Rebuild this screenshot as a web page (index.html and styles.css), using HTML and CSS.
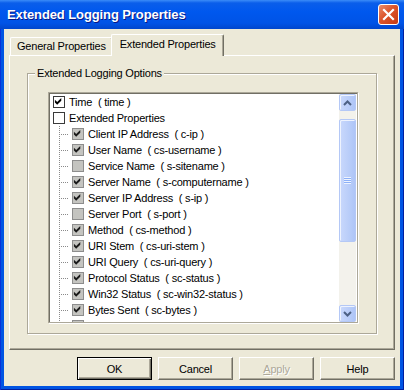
FILE: index.html
```html
<!DOCTYPE html>
<html lang="en">
<head>
  <meta charset="UTF-8"/>
  <title>Extended Logging Properties</title>
  <link rel="stylesheet" href="styles.css">
</head>
<body>
  <div class="window">
    <div class="titlebar">
      <span class="title">Extended Logging Properties</span>
      <span class="close">
        <svg width="13" height="13" viewBox="0 0 13 13"><path d="M2 2 L11 11 M11 2 L2 11" stroke="#fff" stroke-width="2.2" stroke-linecap="square"/></svg>
      </span>
    </div>
    <div class="frame">
      <div class="client">
        <div class="tabs">
          <div class="tab">General Properties</div>
          <div class="tab active">Extended Properties</div>
        </div>
        <div class="panel">
          <fieldset class="group">
            <legend>Extended Logging Options</legend>
            <div class="listbox">
              <div class="tree">
                <div class="row"><span class="cb on"><svg viewBox="0 0 11 11"><polygon points="1,3 3.5,5.5 8,1 8,4 3.5,8.5 1,6"/></svg></span><span class="label">Time  ( time )</span></div>
                <div class="row"><span class="cb"></span><span class="label">Extended Properties</span></div>
                <div class="row child"><span class="branch"></span><span class="cb off on"><svg viewBox="0 0 11 11"><polygon points="1,3 3.5,5.5 8,1 8,4 3.5,8.5 1,6"/></svg></span><span class="label">Client IP Address  ( c-ip )</span></div>
                <div class="row child"><span class="branch"></span><span class="cb off on"><svg viewBox="0 0 11 11"><polygon points="1,3 3.5,5.5 8,1 8,4 3.5,8.5 1,6"/></svg></span><span class="label">User Name  ( cs-username )</span></div>
                <div class="row child"><span class="branch"></span><span class="cb off"></span><span class="label">Service Name  ( s-sitename )</span></div>
                <div class="row child"><span class="branch"></span><span class="cb off on"><svg viewBox="0 0 11 11"><polygon points="1,3 3.5,5.5 8,1 8,4 3.5,8.5 1,6"/></svg></span><span class="label">Server Name  ( s-computername )</span></div>
                <div class="row child"><span class="branch"></span><span class="cb off on"><svg viewBox="0 0 11 11"><polygon points="1,3 3.5,5.5 8,1 8,4 3.5,8.5 1,6"/></svg></span><span class="label">Server IP Address  ( s-ip )</span></div>
                <div class="row child"><span class="branch"></span><span class="cb off"></span><span class="label">Server Port  ( s-port )</span></div>
                <div class="row child"><span class="branch"></span><span class="cb off on"><svg viewBox="0 0 11 11"><polygon points="1,3 3.5,5.5 8,1 8,4 3.5,8.5 1,6"/></svg></span><span class="label">Method  ( cs-method )</span></div>
                <div class="row child"><span class="branch"></span><span class="cb off on"><svg viewBox="0 0 11 11"><polygon points="1,3 3.5,5.5 8,1 8,4 3.5,8.5 1,6"/></svg></span><span class="label">URI Stem  ( cs-uri-stem )</span></div>
                <div class="row child"><span class="branch"></span><span class="cb off on"><svg viewBox="0 0 11 11"><polygon points="1,3 3.5,5.5 8,1 8,4 3.5,8.5 1,6"/></svg></span><span class="label">URI Query  ( cs-uri-query )</span></div>
                <div class="row child"><span class="branch"></span><span class="cb off on"><svg viewBox="0 0 11 11"><polygon points="1,3 3.5,5.5 8,1 8,4 3.5,8.5 1,6"/></svg></span><span class="label">Protocol Status  ( sc-status )</span></div>
                <div class="row child"><span class="branch"></span><span class="cb off on"><svg viewBox="0 0 11 11"><polygon points="1,3 3.5,5.5 8,1 8,4 3.5,8.5 1,6"/></svg></span><span class="label">Win32 Status  ( sc-win32-status )</span></div>
                <div class="row child"><span class="branch"></span><span class="cb off on"><svg viewBox="0 0 11 11"><polygon points="1,3 3.5,5.5 8,1 8,4 3.5,8.5 1,6"/></svg></span><span class="label">Bytes Sent  ( sc-bytes )</span></div>
                <div class="row child"><span class="branch"></span><span class="cb off"></span><span class="label">Bytes Received  ( cs-bytes )</span></div>
              </div>
              <div class="scrollbar">
                <div class="sb-btn">
                  <svg width="9" height="6" viewBox="0 0 9 6"><path d="M1 5 L4.5 1.5 L8 5" fill="none" stroke="#4d6185" stroke-width="2"/></svg>
                </div>
                <div class="sb-track">
                  <div class="thumb">
                    <span class="grip"></span>
                  </div>
                </div>
                <div class="sb-btn">
                  <svg width="9" height="6" viewBox="0 0 9 6"><path d="M1 1 L4.5 4.5 L8 1" fill="none" stroke="#4d6185" stroke-width="2"/></svg>
                </div>
              </div>
            </div>
          </fieldset>
        </div>
        <div class="buttons">
          <button class="btn default">OK</button>
          <button class="btn">Cancel</button>
          <button class="btn" disabled><u>A</u>pply</button>
          <button class="btn">Help</button>
        </div>
      </div>
    </div>
  </div>
</body>
</html>
```

FILE: styles.css
```css
:root {
  --face: #ece9d8;
  --shadow: #aca899;
  --dark: #716f64;
  --luna: #0054e3;
}

body {
  margin: 0;
  font-family: 'Liberation Sans', Arial, sans-serif;
  font-size: 11px;
  letter-spacing: -0.2px;
  color: #000;
}

.window {
  width: 404px;
  height: 390px;
  display: flex;
  flex-direction: column;
  background: var(--luna);
}

.titlebar {
  height: 29px;
  flex: none;
  display: flex;
  align-items: center;
  justify-content: space-between;
  padding: 0 5px 0 7px;
  background: linear-gradient(#3b8cf8 0, #0a5eea 3px, #0058ee 40%, #0053e6 80%, #0046cc 100%);
}

.title {
  color: #fff;
  font-weight: bold;
  font-size: 13px;
  letter-spacing: -0.1px;
  text-shadow: 1px 1px 0 #0a1883;
  padding-bottom: 1px;
}

.close {
  width: 21px;
  height: 21px;
  box-sizing: border-box;
  border: 1px solid #fff;
  border-radius: 3px;
  background: linear-gradient(135deg, #e98d6c 0, #dc542b 45%, #c53a13 100%);
  display: flex;
  align-items: center;
  justify-content: center;
}

.frame {
  flex: 1;
  display: flex;
  padding: 0 4px 4px;
  box-shadow: inset 1px 0 0 #0831d9, inset -1px 0 0 #001ea0, inset 0 -1px 0 #001ea0;
}

.client {
  flex: 1;
  display: flex;
  flex-direction: column;
  background: var(--face);
  padding: 6px 5px 6px 5px;
}

/* tabs */
.tabs {
  display: flex;
  align-items: flex-end;
  height: 20px;
  padding-left: 1px;
}

.tab {
  height: 18px;
  line-height: 17px;
  padding: 0 6px;
  box-sizing: border-box;
  border: 1px solid #fff;
  border-right: 1px solid var(--dark);
  border-bottom: none;
  border-radius: 2px 2px 0 0;
  box-shadow: inset -1px 0 0 var(--shadow);
  background: var(--face);
}

.tab.active {
  position: relative;
  z-index: 1;
  height: 22px;
  line-height: 18px;
  margin: 0 -2px -1px -2px;
  padding: 0 7px 0 8px;
}

.panel {
  flex: 1;
  display: flex;
  flex-direction: column;
  border-top: 1px solid #fff;
  border-left: 1px solid #fff;
  border-right: 1px solid var(--dark);
  border-bottom: 1px solid var(--dark);
  box-shadow: inset -1px -1px 0 var(--shadow);
  padding: 11px 17px 14px 17px;
}

/* group box */
.group {
  margin: 0;
  padding: 0 18px 10px 20px;
  border: 1px solid var(--shadow);
  box-shadow: 1px 1px 0 #fff, inset 1px 1px 0 #fff;
}

.group legend {
  margin-left: -13px;
  padding: 0 2px;
  line-height: 13px;
  background: var(--face);
}

.listbox {
  margin-top: 12px;
  height: 231px;
  box-sizing: border-box;
  display: flex;
  background: #fff;
  border: 1px solid var(--shadow);
  box-shadow: inset 1px 1px 0 var(--dark), 1px 1px 0 #fff;
  padding: 1px 1px 0 1px;
}

.tree {
  flex: 1;
  overflow: hidden;
  padding-left: 3px;
}

.row {
  height: 16px;
  display: flex;
  align-items: center;
  white-space: pre;
}

.cb {
  width: 12px;
  height: 12px;
  box-sizing: border-box;
  border: 1px solid #3a3a3a;
  background: #fff;
  margin-right: 4px;
  display: flex;
  align-items: center;
  justify-content: center;
}

.cb svg {
  width: 10px;
  height: 10px;
  fill: #000;
}

.cb.off {
  border-color: #8d8d8d;
  background: #c4c4c0;
}

.cb.off svg {
  fill: #1a1a1a;
}

.branch {
  width: 16px;
  height: 16px;
  flex: none;
  margin-right: 3px;
  background-image:
    repeating-linear-gradient(to bottom, #8a8a8a 0 1px, transparent 1px 2px),
    repeating-linear-gradient(to right, #8a8a8a 0 1px, transparent 1px 2px);
  background-size: 1px 16px, 10px 1px;
  background-position: 6px 0, 6px 8px;
  background-repeat: no-repeat;
}

/* scrollbar */
.scrollbar {
  width: 17px;
  display: flex;
  flex-direction: column;
  background: #f3f2ec;
}

.sb-btn,
.thumb {
  box-sizing: border-box;
  border: 1px solid #b4c8f6;
  border-radius: 2px;
  background: linear-gradient(90deg, #c9d8fc, #b9cdf9 60%, #aec5f7);
  box-shadow: inset 1px 1px 0 #eef3fe;
}

.sb-btn {
  height: 17px;
  display: flex;
  align-items: center;
  justify-content: center;
}

.sb-track {
  flex: 1;
}

.thumb {
  margin-top: 8px;
  height: 123px;
  display: flex;
  align-items: center;
  justify-content: center;
}

.grip {
  width: 7px;
  height: 7px;
  background: repeating-linear-gradient(to bottom, #eef3fe 0 1px, #8cb0f8 1px 2px);
}

/* buttons */
.buttons {
  display: flex;
  justify-content: flex-end;
  gap: 6px;
  margin-top: 7px;
}

.btn {
  width: 75px;
  height: 23px;
  font-family: inherit;
  font-size: 11px;
  letter-spacing: -0.2px;
  color: #000;
  background: var(--face);
  border: 1px solid;
  border-color: #fff var(--dark) var(--dark) #fff;
  box-shadow: inset -1px -1px 0 var(--shadow);
  padding: 0;
}

.btn.default {
  border-color: #000;
  box-shadow: inset 1px 1px 0 #fff, inset -1px -1px 0 var(--dark), inset -2px -2px 0 var(--shadow);
}

.btn:disabled {
  color: var(--shadow);
  text-shadow: 1px 1px 0 #fff;
}
```
